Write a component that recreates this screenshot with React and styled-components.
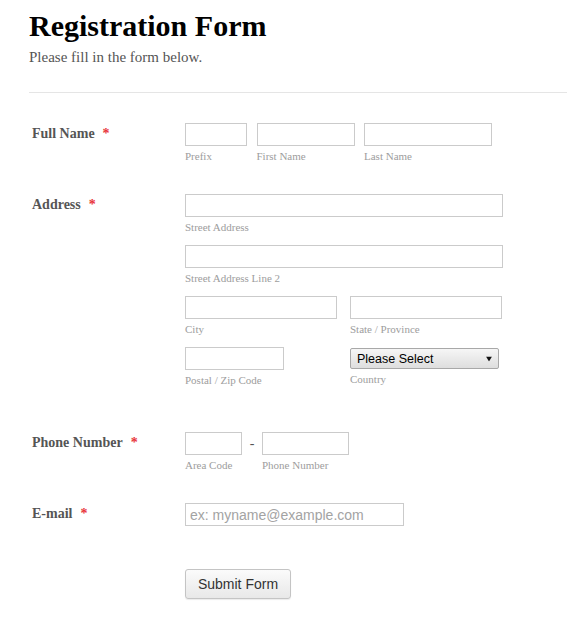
import styled, { createGlobalStyle } from "styled-components";

const GlobalStyle = createGlobalStyle`
    html, body {
        margin: 0;
        padding: 0;
        background: #fff;
    }
    body {
        font-family: "Liberation Serif", "Times New Roman", serif;
    }
    * {
        box-sizing: border-box;
    }
`

const Page = styled.div`
    width: 567px;
    padding: 11px 0 0 29px;
`

const Title = styled.h1`
    margin: 0;
    font-size: 30px;
    line-height: 30px;
    font-weight: bold;
    color: #000;
`

const Subtitle = styled.p`
    margin: 7px 0 0;
    font-size: 15px;
    line-height: 18px;
    color: #555;
`

const Divider = styled.hr`
    margin: 26px 0 0;
    border: 0;
    border-top: 1px solid #e5e5e5;
    height: 0;
`

const Row = styled.div`
    display: flex;
    align-items: flex-start;
    margin-top: ${({ $gap }) => $gap}px;
`

const Label = styled.label`
    width: 156px;
    flex-shrink: 0;
    padding: 1px 0 0 3px;
    font-size: 14px;
    line-height: 20px;
    font-weight: bold;
    color: #555;
`

const Required = styled.span`
    margin-left: 8px;
    color: #e8343a;
    font-weight: bold;
`

const FieldRow = styled.div`
    display: flex;
    align-items: flex-start;
    gap: ${({ $gap }) => $gap ?? 9}px;
`

const Field = styled.div`
    display: flex;
    flex-direction: column;
    ${({ $wide }) => $wide && `
        grid-column: span 2;
    `}
`

const TextBox = styled.input`
    display: block;
    width: ${({ $w }) => $w}px;
    height: 23px;
    margin: 0;
    padding: 0 4px;
    border: 1px solid #cbcbcb;
    border-radius: 0;
    background: #fff;
    font-family: "Liberation Sans", Arial, sans-serif;
    font-size: 14px;
    color: #333;
    outline: none;

    &::placeholder {
        color: #a3a3a3;
    }
`

const SubLabel = styled.span`
    display: block;
    margin-top: 3px;
    font-size: 11px;
    line-height: 14px;
    color: #9d9d9d;
    white-space: nowrap;
`

const AddressGrid = styled.div`
    display: grid;
    grid-template-columns: 165px 152px;
    row-gap: 11px;
`

const SelectWrap = styled.div`
    position: relative;
    width: 149px;
    margin-top: 1px;
`

const Select = styled.select`
    display: block;
    width: 100%;
    height: 21px;
    margin: 0;
    padding: 0 18px 0 6px;
    appearance: none;
    border: 1px solid #a8a8a8;
    border-radius: 2px;
    background: linear-gradient(#f6f6f6, #dedede);
    font-family: "Liberation Sans", Arial, sans-serif;
    font-size: 12.5px;
    color: #000;
    outline: none;
`

const Arrow = styled.svg`
    position: absolute;
    right: 7px;
    top: 50%;
    transform: translateY(-50%);
    pointer-events: none;
`

const Dash = styled.span`
    width: 20px;
    flex-shrink: 0;
    text-align: center;
    font-size: 14px;
    line-height: 23px;
    color: #555;
`

const SubmitButton = styled.button`
    display: block;
    width: 106px;
    height: 30px;
    margin: 0 0 0 156px;
    padding: 0;
    border: 1px solid #c4c4c4;
    border-radius: 3px;
    background: linear-gradient(#fbfbfb, #e8e8e8);
    box-shadow: 0 1px 1px rgba(0, 0, 0, 0.08);
    font-family: "Liberation Sans", Arial, sans-serif;
    font-size: 14px;
    color: #333;
    cursor: pointer;
`

const SubmitRow = styled.div`
    margin-top: ${({ $gap }) => $gap}px;
    padding-bottom: 30px;
`

const TextField = ({ width, sub, ...rest }) => (
    <Field>
        <TextBox type="text" $w={width} {...rest} />
        {sub ? <SubLabel>{sub}</SubLabel> : null}
    </Field>
)

const App = () => {
    return <>
        <GlobalStyle />
        <Page>
            <Title>Registration Form</Title>
            <Subtitle>Please fill in the form below.</Subtitle>
            <Divider />

            <form onSubmit={e => e.preventDefault()}>
                <Row $gap={30}>
                    <Label>Full Name<Required>*</Required></Label>
                    <FieldRow $gap={9.5}>
                        <TextField width={62} sub="Prefix" />
                        <TextField width={98} sub="First Name" />
                        <TextField width={128} sub="Last Name" />
                    </FieldRow>
                </Row>

                <Row $gap={31}>
                    <Label>Address<Required>*</Required></Label>
                    <AddressGrid>
                        <Field $wide>
                            <TextBox type="text" $w={318} />
                            <SubLabel>Street Address</SubLabel>
                        </Field>
                        <Field $wide>
                            <TextBox type="text" $w={318} />
                            <SubLabel>Street Address Line 2</SubLabel>
                        </Field>
                        <TextField width={152} sub="City" />
                        <TextField width={152} sub="State / Province" />
                        <TextField width={99} sub="Postal / Zip Code" />
                        <Field>
                            <SelectWrap>
                                <Select defaultValue="">
                                    <option value="">Please Select</option>
                                </Select>
                                <Arrow width="6" height="5" viewBox="0 0 6 5">
                                    <polygon points="0,0 6,0 3,5" fill="#111" />
                                </Arrow>
                            </SelectWrap>
                            <SubLabel>Country</SubLabel>
                        </Field>
                    </AddressGrid>
                </Row>

                <Row $gap={45}>
                    <Label>Phone Number<Required>*</Required></Label>
                    <FieldRow $gap={0}>
                        <TextField width={57} sub="Area Code" />
                        <Dash>-</Dash>
                        <TextField width={87} sub="Phone Number" />
                    </FieldRow>
                </Row>

                <Row $gap={31}>
                    <Label>E-mail<Required>*</Required></Label>
                    <TextBox type="email" $w={219} placeholder="ex: myname@example.com" />
                </Row>

                <SubmitRow $gap={43}>
                    <SubmitButton type="submit">Submit Form</SubmitButton>
                </SubmitRow>
            </form>
        </Page>
    </>
}

export default App;
